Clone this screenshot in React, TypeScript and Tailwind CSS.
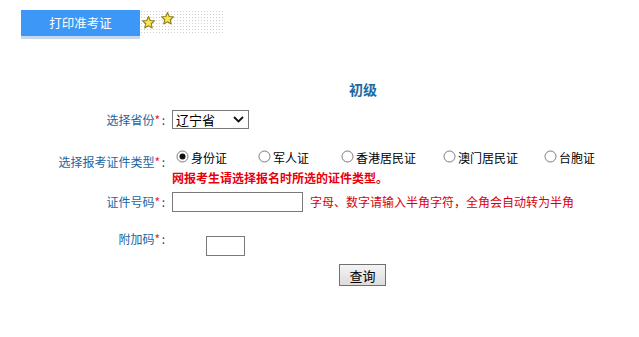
import React from "react";

const LBL = "w-[167px] shrink-0 text-right text-[12px] leading-[16px] text-[#1c64a0]";
const Star = ({ className }: { className: string }) => (
  <svg width="13" height="13" viewBox="0 0 24 24" className={className}>
    <polygon
      points="12,1 15.2,8.3 23,9 17.1,14.3 18.9,22.2 12,18.1 5.1,22.2 6.9,14.3 1,9 8.8,8.3"
      fill="#f7e64c"
      stroke="#8f7d1e"
      strokeWidth="2"
      strokeLinejoin="round"
    />
  </svg>
);

const Radio = ({ checked, label, w }: { checked?: boolean; label: string; w: string }) => (
  <div className={`flex items-center ${w}`}>
    <svg width="13" height="13" viewBox="0 0 13 13" className="shrink-0 -mt-[3px]">
      <circle cx="6.5" cy="6.5" r="5.5" fill="#fff" stroke="#7a7a7a" strokeWidth="1" />
      {checked && <circle cx="6.5" cy="6.5" r="3" fill="#111" />}
    </svg>
    <span className="ml-[2px] text-[12px] leading-[16px] text-black">{label}</span>
  </div>
);

const Req = () => (
  <>
    <span className="text-[#e8202a]">*</span>
    <span className="inline-block w-[7px] text-center text-[#1c3f60]">:</span>
  </>
);

export default function App() {
  return (
    <div
      className="w-[639px] h-[337px] bg-white overflow-hidden"
      style={{ fontFamily: '"Noto Sans CJK SC", "Noto Sans", sans-serif' }}
    >
      {/* Tab header */}
      <div className="flex pt-[10px] pl-[21px]">
        <div className="w-[119px] h-[26px] bg-[#3c97f7] shadow-[0_3px_0_#c7d7ee] flex items-center justify-center text-white text-[12.5px] leading-none">
          打印准考证
        </div>
        <div className="relative w-[85px] h-[25px] bg-[radial-gradient(#cfcfcf_0.8px,transparent_0.9px)] bg-[length:3px_3px]">
          <Star className="absolute left-[2px] top-[6px]" />
          <Star className="absolute left-[21px] top-[2px]" />
        </div>
      </div>

      {/* Title */}
      <div className="mt-[43px] pl-[349px] text-[14px] leading-[20px] font-bold text-[#1b6aa4]">初级</div>

      {/* Province */}
      <div className="flex items-center mt-[11px] h-[19px]">
        <div className={LBL}>
          选择省份<Req />
        </div>
        <div className="ml-[5px] w-[77px] h-[19px] border border-[#7a7a7a] flex items-center justify-between pl-[3px] pr-[4px]">
          <span className="text-[13px] leading-none text-black">辽宁省</span>
          <svg width="11" height="7" viewBox="0 0 11 7">
            <polyline points="1,1 5.5,5.5 10,1" fill="none" stroke="#111" strokeWidth="1.8" />
          </svg>
        </div>
      </div>

      {/* Certificate type */}
      <div className="flex mt-[21px]">
        <div className={`${LBL} mt-[4px]`}>
          选择报考证件类型<Req />
        </div>
        <div className="ml-[9px] flex flex-col">
          <div className="flex h-[16px] items-center">
            <Radio checked label="身份证" w="w-[82px]" />
            <Radio label="军人证" w="w-[83px]" />
            <Radio label="香港居民证" w="w-[102px]" />
            <Radio label="澳门居民证" w="w-[101px]" />
            <Radio label="台胞证" w="w-[60px]" />
          </div>
          <div className="-ml-[4px] mt-[4px] text-[12px] leading-[15px] font-bold text-[#e8000b]">
            网报考生请选择报名时所选的证件类型。
          </div>
        </div>
      </div>

      {/* ID number */}
      <div className="flex items-center mt-[7px] h-[20px]">
        <div className={LBL}>
          证件号码<Req />
        </div>
        <div className="ml-[5px] w-[131px] h-[20px] border border-[#7a7a7a] bg-white" />
        <div className="ml-[7px] text-[12px] leading-[16px] text-[#d9000d]">
          字母、数字请输入半角字符，全角会自动转为半角
        </div>
      </div>

      {/* Extra code */}
      <div className="flex mt-[19px]">
        <div className={LBL}>
          附加码<Req />
        </div>
        <div className="ml-[39px] mt-[5px] w-[39px] h-[20px] border border-[#7a7a7a] bg-white" />
      </div>

      {/* Button */}
      <div className="mt-[8px] pl-[339px]">
        <div className="w-[47px] h-[22px] border border-[#707070] bg-[linear-gradient(#f4f4f4,#dcdcdc)] flex items-center justify-center text-[13px] leading-none text-black">
          查询
        </div>
      </div>
    </div>
  );
}
